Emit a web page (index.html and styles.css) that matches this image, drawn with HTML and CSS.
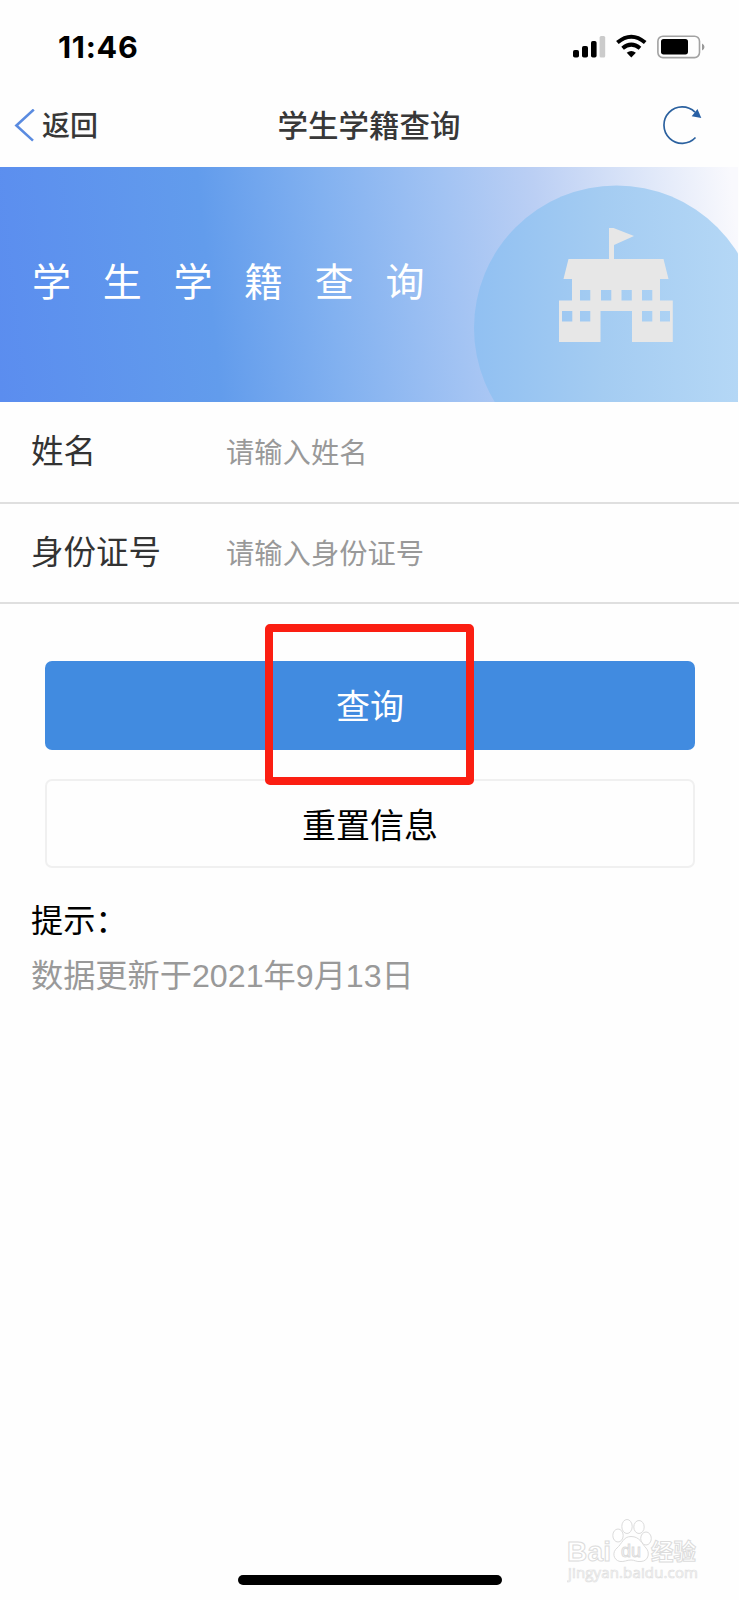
FILE: index.html
```html
<!DOCTYPE html>
<html lang="zh-CN">
<head>
<meta charset="utf-8">
<title>学生学籍查询</title>
<link rel="stylesheet" href="styles.css">
</head>
<body>
<div class="screen">
  <div class="status">
    <span class="time">11:46</span>
    <svg class="status-icons" width="134" height="26" viewBox="0 0 134 26">
      <rect x="0" y="16" width="6" height="7.5" rx="1.8"/>
      <rect x="9" y="12" width="6" height="11.500" rx="1.8"/>
      <rect x="18" y="7" width="5.600" height="16.500" rx="1.8"/>
      <rect x="26.600" y="2" width="5.600" height="21.500" rx="1.5" fill="#cbcbcb"/>
      <g fill="none" stroke="#000" stroke-width="4">
        <path d="M44.400 8.600Q58.300-3.200 72.200 8.600"/>
        <path d="M49.600 14.200Q58.300 7 67 14.200"/>
      </g>
      <path d="M53.700 18.800Q58.300 15 62.900 18.800L58.300 23.500Z"/>
      <rect x="84.900" y="2.200" width="41.600" height="21.400" rx="5" fill="none" stroke="#a2a2a2" stroke-width="1.600"/>
      <rect x="88" y="5" width="27" height="15.400" rx="2.600"/>
      <path d="M129 9.500Q131.500 10.500 131.500 13T129 16.500Z" fill="#999"/>
    </svg>
  </div>
  <div class="nav">
    <div class="back">
      <svg width="22" height="34" viewBox="0 0 22 34"><path d="M19.800 0.600L2.400 16.500L19 31.600" fill="none" stroke="#5a8be0" stroke-width="2.600"/></svg>
      <span>返回</span>
    </div>
    <h1 class="title">学生学籍查询</h1>
    <svg class="refresh" width="40" height="40" viewBox="0 0 40 40">
      <path d="M32.500 31.500A18.200 18.200 0 1 1 32 6.200" fill="none" stroke="#2b619f" stroke-width="1.700"/>
      <path d="M34.500 3L38.300 12L28.700 10.200Z" fill="#2860a5"/>
    </svg>
  </div>
  <div class="banner">
    <span class="banner-title">学生学籍查询</span>
    <svg class="school" width="264" height="235" viewBox="474 167 264 235">
      <defs>
        <linearGradient id="disc" x1="0" x2="1"><stop offset="0" stop-color="#91c0f2"/><stop offset=".45" stop-color="#a4ccf2"/><stop offset="1" stop-color="#b7d9f6"/></linearGradient>
      </defs>
      <circle cx="616.500" cy="328" r="142.500" fill="url(#disc)"/>
      <g fill="#e7e7e7">
        <path d="M609 259V228H613.500L634 236L614 245V259Z"/>
        <path fill-rule="evenodd" d="M568.500 259H663.500L668.500 279H660V300.500H672.800V342H632V311H600.500V342H559V300.500H572V279H563.500ZM580 290v10.500h10.300V290ZM601 290v10.500h10.300V290ZM621.500 290v10.500h10.300V290ZM642 290v10.500h10.300V290ZM562 311v10.500h10.300V311ZM580 311v10.500h10.300V311ZM642 311v10.500h10.300V311ZM660 311v10.500h10V311Z"/>
      </g>
    </svg>
  </div>
  <div class="row"><span class="label">姓名</span><span class="hint">请输入姓名</span></div>
  <div class="row"><span class="label">身份证号</span><span class="hint">请输入身份证号</span></div>
  <div class="actions">
    <div class="btn primary">查询<div class="highlight"></div></div>
    <div class="btn reset">重置信息</div>
  </div>
  <div class="tips">
    <p class="tips-title">提示：</p>
    <p class="tips-text">数据更新于2021年9月13日</p>
  </div>
  <svg class="watermark" width="136" height="66" viewBox="0 0 136 66">
    <g fill="#fff" stroke="#dcdcdc" stroke-width="1">
      <text class="wm-latin" x="0" y="42" textLength="44">Bai</text>
      <ellipse cx="51" cy="16.500" rx="5.200" ry="6.500"/>
      <ellipse cx="60" cy="7.500" rx="5.200" ry="7"/>
      <ellipse cx="72" cy="8" rx="5.200" ry="6.500"/>
      <ellipse cx="79" cy="19.500" rx="5.300" ry="6.500"/>
      <path d="M64 17.500C73 17.500 75 25 79 29C83 33 82 42 74 42.500C69 43 68 41 64 41C60 41 57 43 53 42.500C46 41 45 33 50 29C55 25 56 17.500 64 17.500Z"/>
      <text class="wm-du" x="54" y="38">du</text>
      <text class="wm-cjk" x="84" y="40.500">经验</text>
    </g>
    <text class="wm-url" x="1" y="59" textLength="130">jingyan.baidu.com</text>
  </svg>
  <div class="home"></div>
</div>
</body>
</html>
```
FILE: styles.css
```css
* { box-sizing: border-box; }
body {
  margin: 0;
  background: #fefefe;
  font-family: "Liberation Sans", "Noto Sans CJK SC", sans-serif;
}
.screen {
  display: flex;
  flex-direction: column;
  width: 739px;
  height: 1600px;
  overflow: hidden;
}
.status {
  display: flex;
  justify-content: space-between;
  align-items: center;
  height: 84px;
  padding: 10px 32px 0 58px;
}
.time {
  font: 700 30.5px/34px Inter, sans-serif;
  letter-spacing: 0.7px;
}
.status-icons { margin-top: -1px; }
.nav {
  display: grid;
  grid-template-columns: 1fr auto 1fr;
  align-items: center;
  height: 83px;
  padding: 0 36px 0 14px;
  color: #383838;
}
.back {
  display: flex;
  align-items: center;
  gap: 6px;
  font-size: 28px;
  font-weight: 500;
}
.back span { line-height: 34px; padding-top: 2px; }
.title {
  margin: 0 0 0 21px;
  font-size: 30.5px;
  line-height: 34px;
  font-weight: 500;
}
.refresh { justify-self: end; }
.banner {
  display: flex;
  justify-content: space-between;
  align-items: center;
  width: 738px;
  height: 235px;
  padding-left: 32px;
  background: linear-gradient(84deg, #5b8def 0%, #629cec 29%, #82b1f0 45%, #a2c3f3 61%, #bbcff4 73%, #dae4f8 86%, #f9f9fd 99%);
}
.banner-title {
  color: #fff;
  font-size: 39px;
  line-height: 44px;
  letter-spacing: 31.7px;
  white-space: nowrap;
  margin-top: -4px;
}
.school { flex: none; }
.row {
  display: flex;
  align-items: center;
  height: 102px;
  padding-left: 31px;
  border-bottom: 2px solid #dfdfdf;
}
.row + .row { height: 100px; }
.label {
  width: 195px;
  color: #333;
  font-size: 32.5px;
  line-height: 36px;
}
.hint {
  color: #999;
  font-size: 28.3px;
  line-height: 36px;
  padding-top: 1px;
}
.actions {
  display: flex;
  flex-direction: column;
  gap: 29px;
  padding: 57px 44px 0 45px;
}
.btn {
  position: relative;
  display: flex;
  justify-content: center;
  align-items: center;
  height: 89px;
  padding-top: 2px;
  border-radius: 7px;
  font-size: 34px;
  line-height: 40px;
}
.primary { z-index: 1; background: #418be0; color: #fff; }
.reset { padding-top: 5px; border: 2px solid #f0f0f0; color: #000; }
.highlight {
  position: absolute;
  left: 220px;
  top: -37px;
  width: 209px;
  height: 161px;
  border: 8px solid #fb1e12;
  border-radius: 5px;
}
.tips { padding: 33px 31px 0; }
.tips p { margin: 0; font-size: 32.2px; line-height: 40px; }
.tips-title { color: #000; }
.tips .tips-text { margin-top: 15px; color: #999; }
.watermark { margin: auto 0 0 567px; }
.wm-latin { font: 700 28px "Liberation Sans", sans-serif; }
.wm-du { font: 400 18px "Liberation Sans", sans-serif; }
.wm-cjk { font: 700 22.5px "Noto Sans CJK SC", sans-serif; }
.wm-url { font: 15px "Open Sans", sans-serif; fill: #fff; stroke: #e0e0e0; stroke-width: .7px; }
.home {
  width: 264px;
  height: 10px;
  margin: -10px 0 15px 238px;
  border-radius: 5px;
  background: #000;
}
```
